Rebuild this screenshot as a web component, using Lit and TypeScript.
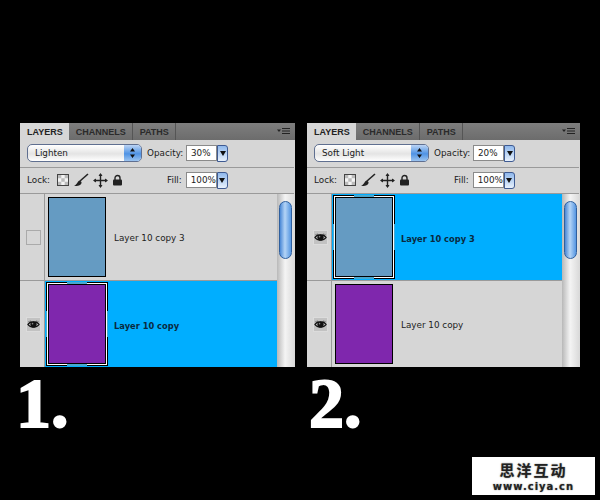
import { LitElement, html, css, svg } from "lit";
import { customElement, property } from "lit/decorators.js";

const eye = svg`<svg width="15" height="15" viewBox="0 0 15 15"><path d="M1 7.500C4 3.500 11 3.500 14 7.500C11 11.500 4 11.500 1 7.500Z" fill="#bbb" stroke="#111" stroke-width="1.400"/><circle cx="7.500" cy="7.500" r="3.600" fill="#111"/><circle cx="6.400" cy="6.500" r=".9" fill="#888"/><path d="M2 4.200L4 5.600M13 4.200L11 5.600M4 3.200L5 4.800M11 3.200L10 4.800" stroke="#111"/></svg>`;

@customElement("layer-row")
class LayerRow extends LitElement {
  @property() name = "";
  @property() fill = "";
  @property({ type: Boolean }) selected = false;
  @property({ type: Boolean }) visibleEye = false;
  static styles = css`
    :host { display: flex; height: 86px; border-bottom: 1px solid #9a9a9a; font: 8.800px "DejaVu Sans", sans-serif; color: #1c1c1c; background: #d6d6d6; }
    :host(:last-child) { border-bottom: none; }
    .vis { width: 25px; flex: none; display: flex; align-items: center; justify-content: center; border-right: 1px solid #9a9a9a; box-sizing: border-box; padding-left: 6px; padding-right: 4px; }
    .box { width: 15px; height: 15px; border: 1px solid #aaa; box-sizing: border-box; display: flex; align-items: center; justify-content: center; flex: none; }
    .box.on { background: #c2c2c2; border-color: #dcdcdc; }
    .main { flex: 1; display: flex; align-items: center; gap: 8px; padding-left: 3px; padding-bottom: 1px; }
    .main span { padding-top: 3px; }
    .main.sel { background: #00aeff; font-weight: 700; font-size: 8.300px; color: #0a2a3f; gap: 7px; padding-left: 2px; padding-bottom: 0; }
    .main.sel span { padding-top: 3px; }
    .thumb { width: 58px; height: 80px; border: 1px solid #000; box-sizing: border-box; flex: none; }
    .frame { position: relative; width: 60px; height: 82px; box-sizing: border-box; background: #fff; padding: 1px; flex: none; outline: 1px solid #000; }
    .frame .thumb { width: 58px; height: 80px; }
    .gap { position: absolute; background: #4aa6cc; }
    .gap.t { left: 20px; width: 20px; top: -1px; height: 2px; }
    .gap.b { left: 20px; width: 20px; bottom: -1px; height: 2px; }
    .gap.l { top: 28px; height: 26px; left: -1px; width: 1px; }
    .gap.r { top: 28px; height: 26px; right: -1px; width: 1px; }
  `;
  render() {
    const thumb = html`<div class="thumb" style="background:${this.fill}"></div>`;
    return html`
      <div class="vis"><div class="box ${this.visibleEye ? "on" : ""}">${this.visibleEye ? eye : ""}</div></div>
      <div class="main ${this.selected ? "sel" : ""}">
        ${this.selected
          ? html`<div class="frame">${thumb}<i class="gap t"></i><i class="gap b"></i><i class="gap l"></i><i class="gap r"></i></div>`
          : thumb}
        <span>${this.name}</span>
      </div>`;
  }
}

@customElement("layers-panel")
class LayersPanel extends LitElement {
  @property() blend = "";
  @property() opacity = "";
  static styles = css`
    :host { display: block; font: 8.800px "DejaVu Sans", sans-serif; color: #1c1c1c; background: #d6d6d6; overflow: hidden; }
    .tabs { display: flex; height: 17px; background: linear-gradient(#7e7e7e, #6c6c6c); align-items: stretch; font: 700 9px "Liberation Sans", sans-serif; color: #2a2a2a; }
    .tab { display: flex; align-items: center; padding: 0 6px 0 7px; border-right: 1px solid #555; }
    .tab.on { background: #d6d6d6; color: #222; border: none; }
    .menu { margin-left: auto; display: flex; align-items: center; padding-right: 4px; }
    .ctl { height: 28px; display: flex; align-items: center; padding: 0 0 1px 7px; box-sizing: border-box; border-bottom: 1px solid #9a9a9a; margin-right: 1px; }
    .ctl.two { height: 26px; }
    .select { width: 115px; height: 18px; box-sizing: border-box; border: 1px solid #5f6f90; border-radius: 5px; background: linear-gradient(#fff, #e4e4e4 55%, #fff); display: flex; align-items: center; padding-left: 7px; overflow: hidden; position: relative; }
    .stepper { position: absolute; right: 0; top: 0; bottom: 0; width: 17px; background: linear-gradient(#bcd4f4, #4f93e4 55%, #9cc4f0); display: flex; align-items: center; justify-content: center; }
    .lbl { margin-left: 5px; width: 39px; }
    .input { width: 31px; height: 16px; box-sizing: border-box; background: #fff; border: 1px solid #8a8a8a; display: flex; align-items: center; padding-left: 4px; }
    .drop { width: 11px; height: 17px; box-sizing: border-box; border: 1px solid #3e5a92; border-radius: 0 3px 3px 0; background: linear-gradient(#8fb8ec, #e8f1fc); display: flex; align-items: center; justify-content: center; }
    .lock { margin-right: 7px; }
    .icons { display: flex; align-items: center; gap: 4px; }
    .fill { margin-left: 44px; margin-right: 4px; }
    .body { display: flex; height: 173px; }
    .rows { flex: 1; min-width: 0; box-sizing: border-box; }
    .track { width: 18px; flex: none; background: linear-gradient(90deg, #b8b8b8, #f4f4f4 45%, #d8d8d8); padding: 7px 2px 0 2px; box-sizing: border-box; }
    .thumb { height: 58px; width: 13px; border: 1px solid #2f5f9e; border-radius: 7px; box-sizing: border-box; background: linear-gradient(90deg, #4a88d6, #b4d4f6 45%, #5596e2); }
  `;
  render() {
    return html`
      <div class="tabs">
        <div class="tab on">LAYERS</div><div class="tab">CHANNELS</div><div class="tab">PATHS</div>
        <div class="menu"><svg width="14" height="9" viewBox="0 0 14 9"><path d="M0 2.500H4L2 5Z" fill="#222"/><path d="M5 1.500H13M5 4H13M5 6.500H13" stroke="#222"/></svg></div>
      </div>
      <div class="ctl">
        <div class="select">${this.blend}<div class="stepper"><svg width="7" height="12" viewBox="0 0 7 12"><path d="M3.500 1L6 4.500H1ZM3.500 11L6 7.500H1Z" fill="#111"/></svg></div></div>
        <span class="lbl">Opacity:</span>
        <div class="input">${this.opacity}</div>
        <div class="drop"><svg width="6" height="5" viewBox="0 0 6 5"><path d="M0 0H6L3 5Z" fill="#111"/></svg></div>
      </div>
      <div class="ctl two">
        <span class="lock">Lock:</span>
        <div class="icons">
          <svg width="12" height="12" viewBox="0 0 12 12"><rect x=".5" y=".5" width="11" height="11" fill="#f4f4f4" stroke="#444"/><path d="M1 1h3.300v3.300H1zM7.700 1H11v3.300H7.700zM4.300 4.300h3.400v3.400H4.300zM1 7.700h3.300V11H1zM7.700 7.700H11V11H7.700z" fill="#bbb"/></svg>
          <svg width="16" height="14" viewBox="0 0 16 14"><path d="M15 1L7 8" stroke="#222" stroke-width="1.600"/><path d="M7 7.500C4 8 5 11 1 13C5 13.500 9 12 8.500 9Z" fill="#222"/></svg>
          <svg width="15" height="15" viewBox="0 0 15 15"><path d="M7.500 1V14M1 7.500H14" stroke="#222" stroke-width="1.400"/><path d="M7.500 0L5.500 3H9.500ZM7.500 15L5.500 12H9.500ZM0 7.500L3 5.500V9.500ZM15 7.500L12 5.500V9.500Z" fill="#222"/></svg>
          <svg width="11" height="12" viewBox="0 0 11 12"><path d="M3 6V4a2.500 2.500 0 0 1 5 0V6" fill="none" stroke="#222" stroke-width="1.400"/><rect x="1" y="5.500" width="9" height="6" rx="1" fill="#222"/></svg>
        </div>
        <span class="fill">Fill:</span>
        <div class="input">100%</div>
        <div class="drop"><svg width="6" height="5" viewBox="0 0 6 5"><path d="M0 0H6L3 5Z" fill="#111"/></svg></div>
      </div>
      <div class="body">
        <div class="rows"><slot></slot></div>
        <div class="track"><div class="thumb"></div></div>
      </div>`;
  }
}

@customElement("app-root")
class AppRoot extends LitElement {
  static styles = css`
    :host { display: block; width: 600px; height: 500px; background: #000; overflow: hidden; }
    .cols { display: flex; gap: 12px; padding: 123px 0 0 20px; }
    .col { display: flex; flex-direction: column; }
    .col.a { width: 275px; }
    .col.b { width: 273px; }
    .num { color: #fff; font: 700 70px/1 "Liberation Serif", serif; margin: 2px 0 0 -4px; height: 70px; -webkit-text-stroke: 2px #fff; }
    .col.b .num { margin-left: 2px; }
    .wm { width: 123px; height: 38px; margin: 18px 0 0 472px; background: #fff; display: flex; flex-direction: column; align-items: center; justify-content: center; color: #222; }
    .wm b { font: 700 15px/22px "Noto Sans CJK SC", sans-serif; letter-spacing: 2px; text-shadow: 0 0 1.500px #777; }
    .wm i { font: 700 10px/12px "DejaVu Sans", sans-serif; letter-spacing: 1px; text-shadow: 0 0 1.500px #777; }
  `;
  render() {
    return html`
      <div class="cols">
        <div class="col a">
          <layers-panel blend="Lighten" opacity="30%">
            <layer-row name="Layer 10 copy 3" fill="#659bc2"></layer-row>
            <layer-row name="Layer 10 copy" fill="#7f27ad" selected visibleEye></layer-row>
          </layers-panel>
          <div class="num">1.</div>
        </div>
        <div class="col b">
          <layers-panel blend="Soft Light" opacity="20%">
            <layer-row name="Layer 10 copy 3" fill="#659bc2" selected visibleEye></layer-row>
            <layer-row name="Layer 10 copy" fill="#7f27ad" visibleEye></layer-row>
          </layers-panel>
          <div class="num">2.</div>
        </div>
      </div>
      <div class="wm"><b>思洋互动</b><i>www.ciya.cn</i></div>`;
  }
}
